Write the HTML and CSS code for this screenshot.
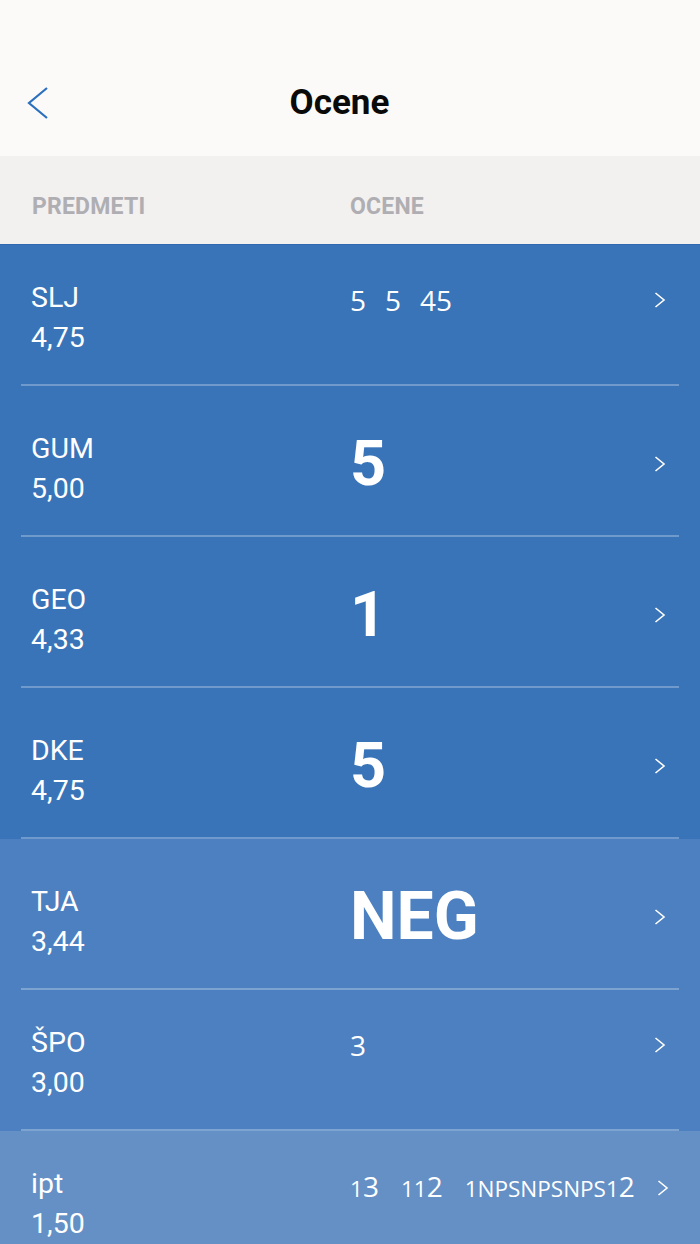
FILE: index.html
```html
<!DOCTYPE html>
<html lang="sl">
<head>
<meta charset="utf-8">
<title>Ocene</title>
<link rel="stylesheet" href="styles.css">
</head>
<body>
<div class="page">
  <header class="nav">
    <button class="back" aria-label="Nazaj">
      <svg width="22" height="32" viewBox="0 0 22 32"><polyline points="20,1 2,16 20,31" fill="none" stroke="#2b6fbe" stroke-width="2.2" stroke-linejoin="miter"/></svg>
    </button>
    <h1 class="nav-title">Ocene</h1>
  </header>

  <div class="cols">
    <span class="col col-subj">PREDMETI</span>
    <span class="col col-grades">OCENE</span>
  </div>

  <ul class="list">
    <li class="row row--a">
      <div class="row-in">
        <div class="subj"><div class="subj-name">SLJ</div><div class="subj-avg">4,75</div></div>
        <div class="right">
          <div class="grades"><span class="g">5</span><span class="g">5</span><span class="g">45</span></div>
          <svg class="chev" width="12" height="16" viewBox="0 0 12 16"><polyline points="1.5,1 10,8 1.5,15" fill="none" stroke="#fff" stroke-width="1.6"/></svg>
        </div>
      </div>
    </li>
    <li class="row row--a">
      <div class="row-in">
        <div class="subj"><div class="subj-name">GUM</div><div class="subj-avg">5,00</div></div>
        <div class="right">
          <div class="grades grades--big">5</div>
          <svg class="chev" width="12" height="16" viewBox="0 0 12 16"><polyline points="1.5,1 10,8 1.5,15" fill="none" stroke="#fff" stroke-width="1.6"/></svg>
        </div>
      </div>
    </li>
    <li class="row row--a">
      <div class="row-in">
        <div class="subj"><div class="subj-name">GEO</div><div class="subj-avg">4,33</div></div>
        <div class="right">
          <div class="grades grades--big">1</div>
          <svg class="chev" width="12" height="16" viewBox="0 0 12 16"><polyline points="1.5,1 10,8 1.5,15" fill="none" stroke="#fff" stroke-width="1.6"/></svg>
        </div>
      </div>
    </li>
    <li class="row row--a">
      <div class="row-in">
        <div class="subj"><div class="subj-name">DKE</div><div class="subj-avg">4,75</div></div>
        <div class="right">
          <div class="grades grades--big">5</div>
          <svg class="chev" width="12" height="16" viewBox="0 0 12 16"><polyline points="1.5,1 10,8 1.5,15" fill="none" stroke="#fff" stroke-width="1.6"/></svg>
        </div>
      </div>
    </li>
    <li class="row row--b">
      <div class="row-in">
        <div class="subj"><div class="subj-name">TJA</div><div class="subj-avg">3,44</div></div>
        <div class="right">
          <div class="grades grades--big grades--neg">NEG</div>
          <svg class="chev" width="12" height="16" viewBox="0 0 12 16"><polyline points="1.5,1 10,8 1.5,15" fill="none" stroke="#fff" stroke-width="1.6"/></svg>
        </div>
      </div>
    </li>
    <li class="row row--b">
      <div class="row-in">
        <div class="subj"><div class="subj-name">ŠPO</div><div class="subj-avg">3,00</div></div>
        <div class="right">
          <div class="grades"><span class="g">3</span></div>
          <svg class="chev" width="12" height="16" viewBox="0 0 12 16"><polyline points="1.5,1 10,8 1.5,15" fill="none" stroke="#fff" stroke-width="1.6"/></svg>
        </div>
      </div>
    </li>
    <li class="row row--c">
      <div class="row-in">
        <div class="subj"><div class="subj-name">ipt</div><div class="subj-avg">1,50</div></div>
        <div class="right">
          <div class="grades grades--wide"><span class="g"><span class="g-sm">1</span>3</span><span class="g"><span class="g-sm">11</span>2</span><span class="g"><span class="g-sm">1NPSNPSNPS1</span>2</span></div>
          <svg class="chev" width="12" height="16" viewBox="0 0 12 16"><polyline points="1.5,1 10,8 1.5,15" fill="none" stroke="#fff" stroke-width="1.6"/></svg>
        </div>
      </div>
    </li>
  </ul>
</div>
</body>
</html>
```

FILE: styles.css
```css
* { box-sizing: border-box; }

html, body {
  margin: 0;
  padding: 0;
}

body {
  background: #6490c5;
  font-family: Roboto, "Liberation Sans", sans-serif;
  color: #fff;
}

.page {
  width: 700px;
}

.nav {
  height: 156px;
  background: #fbfaf8;
  display: flex;
  align-items: center;
  padding: 49px 70px 0 27px;
}

.back {
  width: 22px;
  height: 32px;
  padding: 0;
  margin: 0;
  border: 0;
  background: none;
  display: flex;
}

.nav-title {
  flex: 1;
  margin: 0;
  text-align: center;
  font-family: Roboto, "Liberation Sans", sans-serif;
  font-weight: 700;
  font-size: 35px;
  line-height: 42px;
  color: #0a0a0a;
}

.cols {
  height: 89px;
  background: #f3f0f0;
  display: flex;
  padding: 37px 0 0 32px;
  font-family: Roboto, "Liberation Sans", sans-serif;
  font-weight: 700;
  font-size: 23px;
  line-height: 28px;
  letter-spacing: 0.2px;
  color: #afaeb2;
  border-bottom: 1px solid #2f6ab0;
}

.col-subj {
  width: 318px;
}

.list {
  list-style: none;
  margin: 0;
  padding: 0;
}

.row--a { background: #3a74b8; }
.row--b { background: #4c80c0; }
.row--c { background: #6490c5; }

.row-in {
  margin: 0 21px;
  padding: 33px 13px 26px 10px;
  border-bottom: 2px solid rgba(255, 255, 255, 0.28);
  display: flex;
  align-items: flex-start;
}

.subj {
  width: 319px;
  flex: 0 0 319px;
  align-self: flex-end;
  font-size: 28.5px;
  line-height: 40px;
}

.right {
  flex: 1;
  display: flex;
  align-items: center;
  justify-content: space-between;
}

.grades {
  font-family: "Open Sans", "Noto Sans", sans-serif;
  font-size: 28px;
  line-height: 44px;
  white-space: nowrap;
}

.g {
  display: inline-block;
  margin-right: 19px;
}

.grades--wide .g {
  margin-right: 22px;
}

.g-sm {
  font-size: 22.5px;
}

.grades--big {
  font-family: Roboto, "Liberation Sans", sans-serif;
  font-weight: 700;
  font-size: 63px;
  line-height: 90px;
}

.grades--neg {
  font-size: 66px;
}

.chev {
  flex: 0 0 auto;
  display: block;
}
```
